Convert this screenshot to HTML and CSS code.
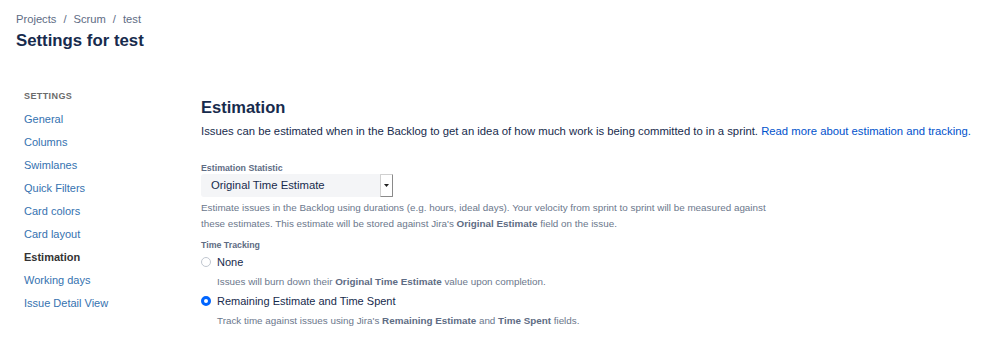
FILE: index.html
```html
<!DOCTYPE html>
<html>
  <head>
    <meta charset="UTF-8">
    <title>Settings for test</title>
    <link rel="stylesheet" href="styles.css">
  </head>
  <body>
    <header class="page-header">
      <nav class="breadcrumbs">
        <a href="#">Projects</a><span class="sep">/</span><a href="#">Scrum</a><span class="sep">/</span><a href="#">test</a>
      </nav>
      <h1>Settings for test</h1>
    </header>

    <div class="layout">
      <aside class="sidebar">
        <h2>Settings</h2>
        <ul>
          <li><a href="#">General</a></li>
          <li><a href="#">Columns</a></li>
          <li><a href="#">Swimlanes</a></li>
          <li><a href="#">Quick Filters</a></li>
          <li><a href="#">Card colors</a></li>
          <li><a href="#">Card layout</a></li>
          <li class="active">Estimation</li>
          <li><a href="#">Working days</a></li>
          <li><a href="#">Issue Detail View</a></li>
        </ul>
      </aside>

      <main class="content">
        <h2>Estimation</h2>
        <p class="intro">Issues can be estimated when in the Backlog to get an idea of how much work is being committed to in a sprint. <a href="#">Read more about estimation and tracking.</a></p>

        <div class="field">
          <label class="field-label">Estimation Statistic</label>
          <div class="select">
            <span class="select-value">Original Time Estimate</span>
            <span class="select-arrow"><svg width="5" height="3" viewBox="0 0 5 3"><path d="M0 0h5L2.5 3z" fill="#222"/></svg></span>
          </div>
          <p class="help">Estimate issues in the Backlog using durations (e.g. hours, ideal days). Your velocity from sprint to sprint will be measured against these estimates. This estimate will be stored against Jira's <b>Original Estimate</b> field on the issue.</p>
        </div>

        <div class="field tracking">
          <label class="field-label">Time Tracking</label>
          <label class="radio"><span class="radio-dot"></span>None</label>
          <p class="help indent">Issues will burn down their <b>Original Time Estimate</b> value upon completion.</p>
          <label class="radio"><span class="radio-dot checked"></span>Remaining Estimate and Time Spent</label>
          <p class="help indent">Track time against issues using Jira's <b>Remaining Estimate</b> and <b>Time Spent</b> fields.</p>
        </div>
      </main>
    </div>
  </body>
</html>
```

FILE: styles.css
```css
html * {
  box-sizing: border-box;
}

body {
  margin: 0;
  font-family: "Liberation Sans", Arial, sans-serif;
  font-size: 11.3px;
  color: #172b4d;
  background: #fff;
}

a {
  text-decoration: none;
}

.page-header {
  padding: 10px 16px 0;
}

.breadcrumbs {
  color: #5e6c84;
  font-size: 11.2px;
  line-height: 18px;
}

.breadcrumbs a {
  color: #5e6c84;
}

.breadcrumbs .sep {
  padding: 0 7px;
}

.page-header h1 {
  margin: 1px 0 0;
  font-size: 16.8px;
  font-weight: bold;
  line-height: 24px;
  color: #172b4d;
}

.layout {
  display: flex;
}

.sidebar {
  width: 201px;
  padding: 36px 0 0 24px;
}

.sidebar h2 {
  margin: 0 0 5px;
  font-size: 9px;
  line-height: 14px;
  font-weight: bold;
  letter-spacing: 0.4px;
  text-transform: uppercase;
  color: #6b6b6b;
}

.sidebar ul {
  list-style: none;
  margin: 0;
  padding: 0;
}

.sidebar li {
  line-height: 23px;
  font-size: 11px;
}

.sidebar a {
  color: #3572b0;
}

.sidebar .active {
  color: #333;
  font-weight: bold;
}

.content {
  flex: 1;
  padding-top: 42px;
}

.content h2 {
  margin: 0;
  font-size: 16.5px;
  font-weight: bold;
  line-height: 24px;
}

.intro {
  margin: 4px 0 0;
  line-height: 16px;
}

.intro a {
  color: #0052cc;
}

.field {
  margin-top: 23px;
}

.field-label {
  display: block;
  font-size: 8.8px;
  font-weight: bold;
  line-height: 12px;
  color: #5e6c84;
}

.select {
  display: flex;
  width: 192px;
  height: 23px;
  background: #f4f5f7;
  border-radius: 3px;
}

.select-value {
  flex: 1;
  padding-left: 10px;
  line-height: 23px;
  font-size: 11.3px;
  color: #172b4d;
}

.select-arrow {
  display: flex;
  align-items: center;
  justify-content: center;
  width: 13px;
  background: #fff;
  border: 1px solid #d0d0d0;
  border-right-color: #8a8a8a;
  border-bottom-color: #8a8a8a;
  border-radius: 1px;
}

.help {
  margin: 3px 0 0;
  max-width: 580px;
  font-size: 9.85px;
  line-height: 16px;
  color: #6b778c;
}

.help b {
  color: #5e6c84;
}

.tracking {
  margin-top: 7px;
}

.help.indent {
  margin-left: 16px;
}

.radio {
  display: flex;
  align-items: center;
  gap: 6px;
  margin-top: 2px;
  font-size: 11px;
  line-height: 18px;
  color: #172b4d;
}

.radio-dot {
  width: 10px;
  height: 10px;
  border-radius: 50%;
  border: 1px solid #c1c7d0;
  background: #fff;
}

.radio-dot.checked {
  border: 3px solid #0065ff;
}
```
